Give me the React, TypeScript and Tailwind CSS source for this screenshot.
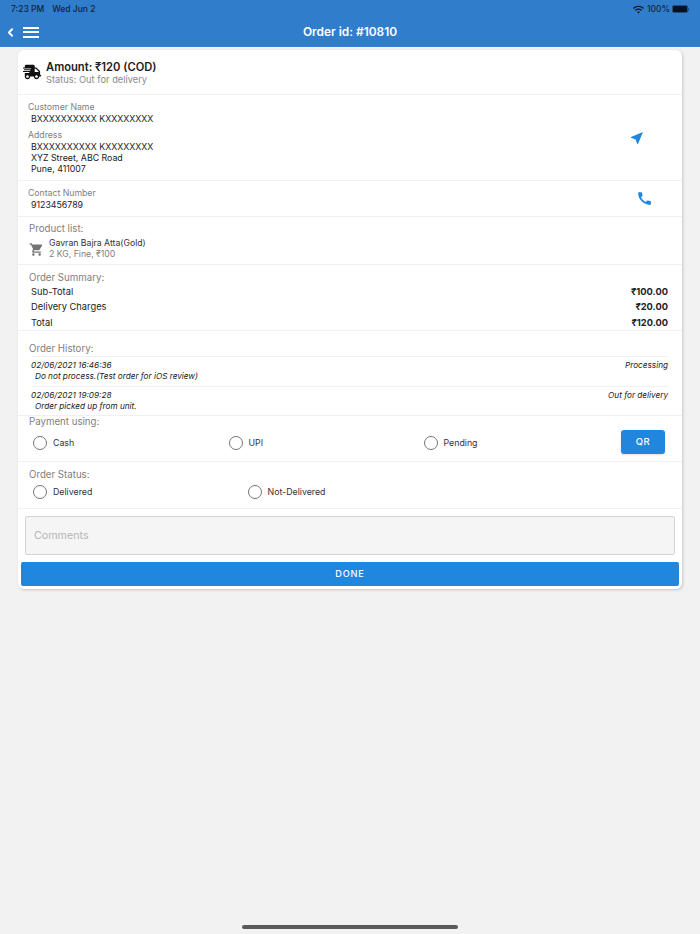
import { ChevronLeft } from "lucide-react"
import { FaShippingFast, FaWifi } from "react-icons/fa"
import { MdCall, MdNearMe, MdShoppingCart } from "react-icons/md"

function Radio({ label }: { label: string }) {
  return (
    <div className="flex items-center">
      <span className="w-[14px] h-[14px] rounded-full border-[1.5px] border-[#757575]" />
      <span className="ml-[6px] text-[8.8px] leading-[14px] text-[#333333]">{label}</span>
    </div>
  )
}

function SummaryRow({ label, value }: { label: string; value: string }) {
  return (
    <div className="flex justify-between h-[15.5px] items-center pl-[13px] pr-[14px] text-[9.3px] text-[#222222]">
      <span>{label}</span>
      <span className="font-bold">{value}</span>
    </div>
  )
}

function HistoryRow({ date, status, note }: { date: string; status: string; note: string }) {
  return (
    <div className="ml-[13px] mr-[14px] h-[30px] pt-[3px] border-t border-[#f0f0f0] italic text-[8.2px] leading-[11px] text-[#222222]">
      <div className="flex justify-between h-[11px] items-center">
        <span>{date}</span>
        <span>{status}</span>
      </div>
      <div className="pl-[4px] h-[11px]">{note}</div>
    </div>
  )
}

export default function App() {
  return (
    <div className="relative w-[700px] h-[934px] overflow-hidden bg-[#f2f2f2] font-['Inter','Liberation_Sans',sans-serif]">
      {/* Header */}
      <div className="h-[47px] bg-[#307dcc] border-b border-[#3a84cf]">
        <div className="h-[18px] flex items-center justify-between pl-[11px] pr-[11px] text-[8.5px] text-[#10243a]">
          <div className="flex gap-[8px] font-medium">
            <span>7:23 PM</span>
            <span>Wed Jun 2</span>
          </div>
          <div className="flex items-center font-medium">
            <FaWifi className="w-[11px] h-[11px] text-[#0b1a2a]" />
            <span className="ml-[3px]">100%</span>
            <span className="ml-[2px] w-[16px] h-[8px] rounded-[2px] bg-[#08121d] border border-[#1f4f80]" />
            <span className="w-[1px] h-[3px] bg-[#1f4f80]" />
          </div>
        </div>
        <div className="relative h-[28px] flex items-center">
          <ChevronLeft className="ml-[4px] w-[13px] h-[13px] text-white" strokeWidth={3.5} />
          <div className="ml-[6px] flex flex-col gap-[2.5px]">
            <span className="block w-[16px] h-[2px] bg-white" />
            <span className="block w-[16px] h-[2px] bg-white" />
            <span className="block w-[16px] h-[2px] bg-white" />
          </div>
          <div className="absolute inset-x-0 text-center text-[11.9px] font-semibold text-white">Order id: #10810</div>
        </div>
      </div>

      {/* Card */}
      <div className="ml-[18px] mt-[3px] w-[664px] h-[539px] rounded-[6px] bg-white shadow-[1px_1px_3px_rgba(0,0,0,0.18)] overflow-hidden">
        <div className="h-[45px] flex items-center border-b border-[#f0f0f0] pl-[5px] pt-[1px]">
          <FaShippingFast className="-mt-[1px] w-[18px] h-[18px] text-[#111111]" />
          <div className="ml-[5px]">
            <div className="text-[11.2px] leading-[13px] font-semibold text-[#222222]">Amount: ₹120 (COD)</div>
            <div className="text-[9.3px] leading-[11px] text-[#8a8a8a]">Status: Out for delivery</div>
          </div>
        </div>

        <div className="relative h-[86px] border-b border-[#f0f0f0] pl-[10px] pt-[7px]">
          <div className="text-[8.7px] leading-[11px] text-[#808080]">Customer Name</div>
          <div className="pl-[3px] text-[8.8px] leading-[11px] text-[#222222]">BXXXXXXXXXX KXXXXXXXX</div>
          <div className="mt-[6px] text-[8.7px] leading-[11px] text-[#808080]">Address</div>
          <div className="pl-[3px] text-[8.8px] leading-[11px] text-[#222222]">
            <div>BXXXXXXXXXX KXXXXXXXX</div>
            <div>XYZ Street, ABC Road</div>
            <div>Pune, 411007</div>
          </div>
          <MdNearMe className="absolute left-[611px] top-[35px] w-[16px] h-[16px] text-[#2186dd]" />
        </div>

        <div className="relative h-[36px] border-b border-[#f0f0f0] pl-[10px] pt-[7px]">
          <div className="text-[8.7px] leading-[11px] text-[#808080]">Contact Number</div>
          <div className="pl-[3px] text-[8.8px] leading-[11px] text-[#222222]">9123456789</div>
          <MdCall className="absolute left-[618px] top-[9px] w-[17px] h-[17px] text-[#2186dd]" />
        </div>

        <div className="h-[48px] border-b border-[#f0f0f0] pl-[11px] pt-[5px]">
          <div className="text-[9.7px] leading-[13px] text-[#808080]">Product list:</div>
          <div className="flex items-center mt-[3px]">
            <MdShoppingCart className="w-[15px] h-[15px] text-[#757575]" />
            <div className="ml-[5px]">
              <div className="text-[8.7px] leading-[11px] text-[#333333]">Gavran Bajra Atta(Gold)</div>
              <div className="text-[8.7px] leading-[11px] text-[#808080]">2 KG, Fine, ₹100</div>
            </div>
          </div>
        </div>

        <div className="h-[66px] border-b border-[#f0f0f0] pt-[6px]">
          <div className="pl-[11px] text-[9.7px] leading-[13px] text-[#808080]">Order Summary:</div>
          <SummaryRow label="Sub-Total" value="₹100.00" />
          <SummaryRow label="Delivery Charges" value="₹20.00" />
          <SummaryRow label="Total" value="₹120.00" />
        </div>

        <div className="h-[85px] border-b border-[#f0f0f0] pt-[11px]">
          <div className="pl-[11px] h-[14px] text-[9.7px] leading-[13px] text-[#808080]">Order History:</div>
          <HistoryRow date="02/06/2021 16:46:36" status="Processing" note="Do not process.(Test order for iOS review)" />
          <HistoryRow date="02/06/2021 19:09:28" status="Out for delivery" note="Order picked up from unit." />
        </div>

        <div className="relative h-[46px] border-b border-[#f0f0f0] pl-[11px]">
          <div className="text-[9.7px] leading-[12px] text-[#808080]">Payment using:</div>
          <div className="mt-[6px] flex items-center h-[17px] pl-[4px]">
            <div className="w-[195.5px]"><Radio label="Cash" /></div>
            <div className="w-[195px]"><Radio label="UPI" /></div>
            <Radio label="Pending" />
          </div>
          <div className="absolute left-[603px] top-[14px] w-[44px] h-[24px] rounded-[3px] bg-[#2186dd] flex items-center justify-center text-[9.5px] font-medium tracking-[0.5px] text-white shadow-sm">QR</div>
        </div>

        <div className="h-[47px] border-b border-[#f0f0f0] pl-[11px] pt-[7px]">
          <div className="text-[9.7px] leading-[12px] text-[#808080]">Order Status:</div>
          <div className="mt-[2px] flex items-center h-[17px] pl-[4px]">
            <div className="w-[214.5px]"><Radio label="Delivered" /></div>
            <Radio label="Not-Delivered" />
          </div>
        </div>

        <div className="ml-[7px] mt-[7px] w-[650px] h-[39px] pt-[1px] rounded-[2px] border border-[#d4d4d4] bg-[#f5f5f5] flex items-center pl-[8px] text-[10.7px] text-[#b5b5b5]">Comments</div>
        <div className="ml-[3px] mt-[7px] w-[658px] h-[24px] rounded-[2px] bg-[#2186dd] flex items-center justify-center text-[9.2px] font-medium tracking-[0.8px] text-white">DONE</div>
      </div>

      {/* Home indicator */}
      <div className="absolute left-[242px] top-[924.5px] w-[216px] h-[4px] rounded-full bg-[#5a5a5a]" />
    </div>
  )
}
